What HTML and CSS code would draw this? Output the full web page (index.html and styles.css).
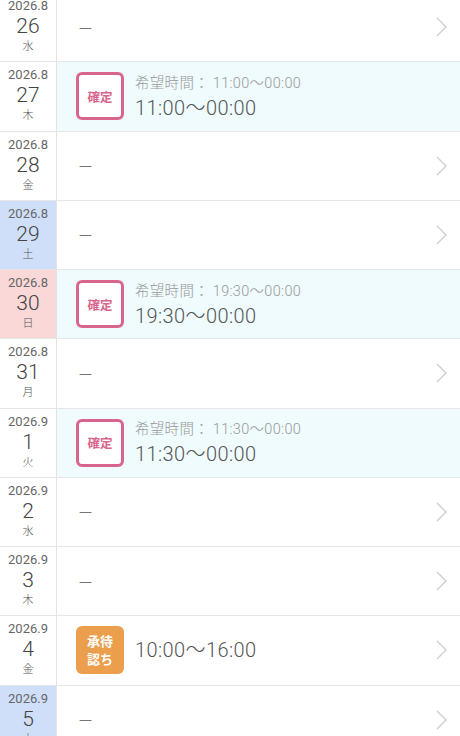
FILE: index.html
```html
<!DOCTYPE html>
<html lang="ja">

<head>
    <meta charset="UTF-8">
    <meta name="viewport" content="width=device-width, initial-scale=1.0">
    <title>シフト</title>
    <link rel="stylesheet" href="styles.css">
</head>

<body>
    <div class="list">
        <div class="row">
            <div class="date"><span class="ym">2026.8</span><span class="d">26</span><span class="w">水</span></div>
            <div class="body"><span class="dash">ー</span><svg class="chev" viewBox="0 0 12 20"><polyline points="1,1 10,10 1,19" /></svg></div>
        </div>
        <div class="row fixed">
            <div class="date"><span class="ym">2026.8</span><span class="d">27</span><span class="w">木</span></div>
            <div class="body">
                <span class="badge">確定</span>
                <div class="info">
                    <span class="hope">希望時間： 11:00〜00:00</span>
                    <span class="time">11:00〜00:00</span>
                </div>
            </div>
        </div>
        <div class="row">
            <div class="date"><span class="ym">2026.8</span><span class="d">28</span><span class="w">金</span></div>
            <div class="body"><span class="dash">ー</span><svg class="chev" viewBox="0 0 12 20"><polyline points="1,1 10,10 1,19" /></svg></div>
        </div>
        <div class="row">
            <div class="date sat"><span class="ym">2026.8</span><span class="d">29</span><span class="w">土</span></div>
            <div class="body"><span class="dash">ー</span><svg class="chev" viewBox="0 0 12 20"><polyline points="1,1 10,10 1,19" /></svg></div>
        </div>
        <div class="row fixed">
            <div class="date sun"><span class="ym">2026.8</span><span class="d">30</span><span class="w">日</span></div>
            <div class="body">
                <span class="badge">確定</span>
                <div class="info">
                    <span class="hope">希望時間： 19:30〜00:00</span>
                    <span class="time">19:30〜00:00</span>
                </div>
            </div>
        </div>
        <div class="row">
            <div class="date"><span class="ym">2026.8</span><span class="d">31</span><span class="w">月</span></div>
            <div class="body"><span class="dash">ー</span><svg class="chev" viewBox="0 0 12 20"><polyline points="1,1 10,10 1,19" /></svg></div>
        </div>
        <div class="row fixed">
            <div class="date"><span class="ym">2026.9</span><span class="d">1</span><span class="w">火</span></div>
            <div class="body">
                <span class="badge">確定</span>
                <div class="info">
                    <span class="hope">希望時間： 11:30〜00:00</span>
                    <span class="time">11:30〜00:00</span>
                </div>
            </div>
        </div>
        <div class="row">
            <div class="date"><span class="ym">2026.9</span><span class="d">2</span><span class="w">水</span></div>
            <div class="body"><span class="dash">ー</span><svg class="chev" viewBox="0 0 12 20"><polyline points="1,1 10,10 1,19" /></svg></div>
        </div>
        <div class="row">
            <div class="date"><span class="ym">2026.9</span><span class="d">3</span><span class="w">木</span></div>
            <div class="body"><span class="dash">ー</span><svg class="chev" viewBox="0 0 12 20"><polyline points="1,1 10,10 1,19" /></svg></div>
        </div>
        <div class="row">
            <div class="date"><span class="ym">2026.9</span><span class="d">4</span><span class="w">金</span></div>
            <div class="body">
                <span class="badge wait">承待<br>認ち</span>
                <span class="time">10:00〜16:00</span>
                <svg class="chev" viewBox="0 0 12 20"><polyline points="1,1 10,10 1,19" /></svg>
            </div>
        </div>
        <div class="row">
            <div class="date sat"><span class="ym">2026.9</span><span class="d">5</span><span class="w">土</span></div>
            <div class="body"><span class="dash">ー</span><svg class="chev" viewBox="0 0 12 20"><polyline points="1,1 10,10 1,19" /></svg></div>
        </div>
    </div>
</body>

</html>
```

FILE: styles.css
```css
* {
    margin: 0;
    padding: 0;
    box-sizing: border-box;
}

body {
    width: 460px;
    height: 736px;
    overflow: hidden;
    background: #fff;
    font-family: Roboto, "Noto Sans CJK JP", sans-serif;
    color: #555;
}

.list {
    margin-top: -7px;
}

.row {
    display: flex;
    height: 69.25px;
    border-bottom: 1px solid #e6e6e6;
}

.date {
    width: 57px;
    flex-shrink: 0;
    border-right: 1px solid #e3e3e3;
    display: flex;
    flex-direction: column;
    align-items: center;
    padding-top: 5px;
    color: #555;
}

.date.sat {
    background: #cfdffa;
}

.date.sun {
    background: #fbd8d8;
}

.ym {
    font-size: 13px;
    line-height: 16px;
    color: #666;
}

.d {
    font-size: 21px;
    line-height: 24px;
    font-weight: 300;
    color: #444;
}

.w {
    font-size: 11px;
    line-height: 14px;
    font-family: "Noto Sans CJK JP", sans-serif;
    font-weight: 300;
}

.body {
    flex: 1;
    display: flex;
    align-items: center;
    padding-left: 19px;
    padding-right: 12px;
}

.fixed .body {
    background: #effbfd;
}

.dash {
    font-family: "Noto Sans CJK JP", sans-serif;
    font-weight: 300;
    font-size: 15px;
    color: #555;
    margin-left: 2px;
}

.chev {
    margin-left: auto;
    width: 12px;
    height: 20px;
}

.chev polyline {
    fill: none;
    stroke: #cfcfcf;
    stroke-width: 1.4;
}

.badge {
    width: 48px;
    height: 48px;
    flex-shrink: 0;
    border: 3px solid #d8658d;
    border-radius: 6px;
    background: #fff;
    color: #d8658d;
    font-family: "Noto Sans CJK JP", sans-serif;
    font-size: 12.5px;
    font-weight: bold;
    display: flex;
    align-items: center;
    justify-content: center;
    text-align: center;
}

.badge.wait {
    border: none;
    background: #eb9e4c;
    color: #fff;
    font-size: 13px;
    line-height: 18px;
}

.info {
    display: flex;
    flex-direction: column;
    margin-left: 11px;
    padding-top: 3px;
}

.hope {
    font-size: 14.5px;
    line-height: 20px;
    color: #999;
    font-weight: 300;
    letter-spacing: 0.3px;
}

.time {
    font-size: 20px;
    line-height: 28px;
    color: #555;
    font-weight: 300;
    letter-spacing: 0.4px;
}

.body > .time {
    margin-left: 11px;
}
```
